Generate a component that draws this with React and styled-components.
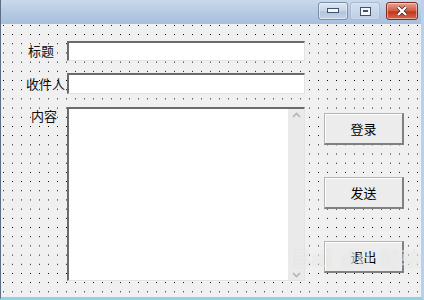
import React from 'react';
import styled, { createGlobalStyle } from 'styled-components';

const Global = createGlobalStyle`
  html, body { margin: 0; padding: 0; background: #fff; }
  body { font-family: "Noto Sans CJK SC", "Liberation Sans", sans-serif; }
`;

const Win = styled.div`
  width: 424px;
  height: 300px;
  display: flex;
  flex-direction: column;
  box-sizing: border-box;
  border-left: 1px solid #5d6d83;
  border-right: 3px solid #b9d1ea;
  border-bottom: 3px solid #8fd3e4;
  position: relative;
  overflow: hidden;
`;

const TitleBar = styled.div`
  height: 24px;
  flex: none;
  display: flex;
  justify-content: flex-end;
  align-items: flex-start;
  padding: 2px 3px 0 0;
  box-sizing: border-box;
  background: linear-gradient(#c9d9ec, #b3c8e2 60%, #a8bfdd);
  gap: 2px;
`;

const CapBtn = styled.div`
  width: ${p => p.w}px;
  height: 18px;
  box-sizing: border-box;
  border: 1px solid ${p => (p.close ? '#7e2b20' : '#7d8ea6')};
  border-radius: 3px;
  margin-left: ${p => p.gap || 0}px;
  display: flex;
  align-items: center;
  justify-content: center;
  background: ${p =>
    p.close
      ? 'linear-gradient(#e8a394, #d0593f 50%, #c0361d 55%, #d56a4c)'
      : p.flat
      ? 'linear-gradient(#d3e0ef, #bdcfe5)'
      : 'linear-gradient(#dfe8f3, #c4d3e6 50%, #b1c4dc 55%, #c3d4e8)'};
  border-color: ${p => (p.flat ? '#a9bbd3' : undefined)};
  box-shadow: inset 0 0 0 1px rgba(255, 255, 255, ${p => (p.flat ? 0.2 : 0.45)});
`;

const Client = styled.div`
  flex: 1;
  display: flex;
  background-color: #f0f0f0;
  background-image: radial-gradient(circle at 1.5px 1.5px, #000 0.55px, transparent 0.8px);
  background-size: 9px 9.2px;
  background-position: 1px 0px;
  padding: 17px 0 0 0;
`;

const Form = styled.div`
  width: 306px;
  display: flex;
  flex-direction: column;
  gap: 12px;
`;

const Row = styled.div`
  display: flex;
  align-items: ${p => (p.top ? 'flex-start' : 'center')};
`;

const Label = styled.div`
  width: 66px;
  box-sizing: border-box;
  padding-left: ${p => p.pl}px;
  padding-top: ${p => p.pt || 0}px;
  font-size: 13px;
  line-height: 16px;
  color: #111;
  white-space: nowrap;
`;

const Box = styled.div`
  width: 238px;
  height: ${p => p.h}px;
  box-sizing: border-box;
  background: #fff;
  border-top: 2px solid #6b6b6b;
  border-left: 2px solid #6b6b6b;
  border-right: 1px solid #e3e3e3;
  border-bottom: 1px solid #e3e3e3;
  display: flex;
  justify-content: flex-end;
  margin-top: ${p => p.mt || 0}px;
`;

const ScrollBar = styled.div`
  width: 16px;
  background: #eaeaea;
  display: flex;
  flex-direction: column;
  justify-content: space-between;
  align-items: center;
  padding: 3px 0 2px;
`;

const Side = styled.div`
  display: flex;
  flex-direction: column;
  gap: 32px;
  padding: 72px 0 0 17px;
`;

const Button = styled.div`
  width: 80px;
  height: 32px;
  box-sizing: border-box;
  background: #ececec;
  border: 1px solid #b4b4b4;
  border-right: 2px solid #808080;
  border-bottom: 2px solid #808080;
  box-shadow: inset 1px 1px 0 #fff;
  display: flex;
  align-items: center;
  justify-content: center;
  font-size: 13px;
  color: #000;
`;

const Watermark = styled.div`
  position: absolute;
  left: 292px;
  top: 244px;
  font-family: "Liberation Sans", sans-serif;
  font-size: 24px;
  font-weight: bold;
  color: rgba(255, 255, 255, 0.5);
  text-shadow: 0 0 1px rgba(160, 160, 160, 0.3);
  letter-spacing: 1px;
  white-space: nowrap;
  pointer-events: none;
  span { font-family: "Noto Sans CJK SC", sans-serif; font-size: 20px; }
`;

const Chevron = ({ up }) => (
  <svg width="9" height="6" viewBox="0 0 9 6">
    <path d={up ? 'M1 5 L4.5 1.5 L8 5' : 'M1 1 L4.5 4.5 L8 1'} fill="none" stroke="#b5b5b5" strokeWidth="1.6" />
  </svg>
);

export default function App() {
  return (
    <>
      <Global />
      <Win>
        <TitleBar>
          <CapBtn w={30}>
            <svg width="12" height="6"><rect x="0.5" y="0.5" width="11" height="4" fill="#f4f6f9" stroke="#41526b" /></svg>
          </CapBtn>
          <CapBtn w={30} flat>
            <svg width="11" height="9"><rect x="0.5" y="0.5" width="10" height="8" fill="#f4f6f9" stroke="#41526b" /><rect x="3" y="3" width="5" height="2" fill="#41526b" /></svg>
          </CapBtn>
          <CapBtn w={32} close gap={4}>
            <svg width="14" height="10" viewBox="0 0 14 10">
              <path d="M3 1 L11 9 M11 1 L3 9" stroke="#3a1a14" strokeWidth="3.6" />
              <path d="M3 1 L11 9 M11 1 L3 9" stroke="#fff" strokeWidth="2.4" />
            </svg>
          </CapBtn>
        </TitleBar>
        <Client>
          <Form>
            <Row>
              <Label pl={27}>标题</Label>
              <Box h={20} />
            </Row>
            <Row>
              <Label pl={25}>收件人</Label>
              <Box h={21} />
            </Row>
            <Row top>
              <Label pl={30} pt={2}>内容</Label>
              <Box h={174} mt={1}>
                <ScrollBar>
                  <Chevron up />
                  <Chevron />
                </ScrollBar>
              </Box>
            </Row>
          </Form>
          <Side>
            <Button>登录</Button>
            <Button>发送</Button>
            <Button>退出</Button>
          </Side>
        </Client>
        <Watermark>Bai du <span>经验</span></Watermark>
      </Win>
    </>
  );
}
